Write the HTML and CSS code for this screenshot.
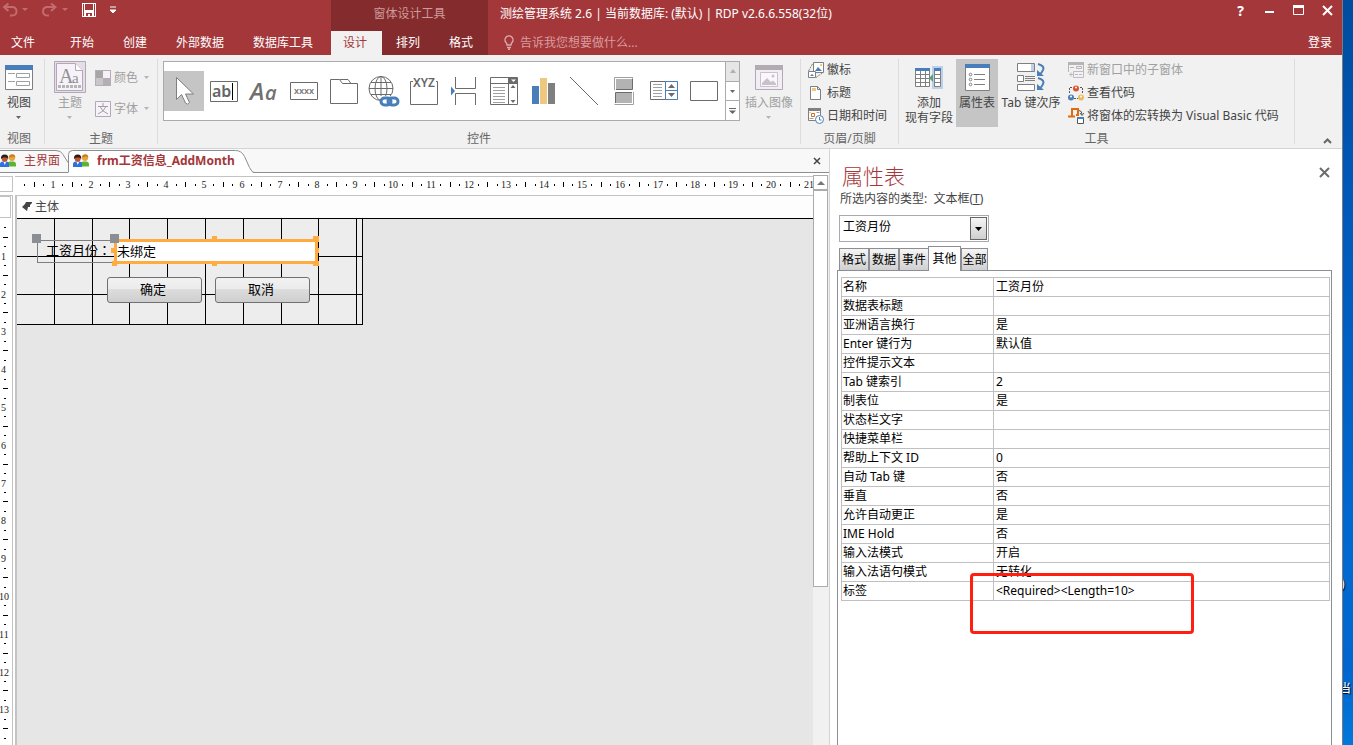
FILE: index.html
```html
<!DOCTYPE html>
<html lang="zh-CN">
<head>
    <meta charset="UTF-8">
    <meta name="viewport" content="width=device-width, initial-scale=1.0">
    <title>测绘管理系统 2.6</title>
    <link rel="stylesheet" href="styles.css">
</head>
<body>
    <svg class="sprite" aria-hidden="true">
        <symbol id="caret" viewBox="0 0 6 3"><path d="M0 0h5L2.500 3z" fill="currentColor"/></symbol>
        <symbol id="users" viewBox="0 0 16 14">
            <path d="M7.500 12.500V9.500q0-2 2.500-2h3q3 0 3 3v2z" fill="#5cb531"/>
            <circle cx="12" cy="4" r="3" fill="#e8a33c"/>
            <path d="M9 3.500q0-3.500 3.500-3.300 3 .3 2.800 3.500l-2-1.200z" fill="#c97d1c"/>
            <path d="M0 13v-2.500q0-3 3-3h3q3 0 3 3V13z" fill="#2f6fe0"/>
            <path d="M3.500 8h2.500L4.800 11z" fill="#fff"/>
            <circle cx="4.700" cy="4.800" r="3" fill="#c4572a"/>
            <path d="M1 5q-.5-4.500 3.700-4.500T8.200 5L6.500 3.500 3 3.600z" fill="#2a1c1a"/>
        </symbol>
    </svg>

    <div class="window">
        <header class="title-bar">
            <div class="main-tabs">
                <div class="quick-access">
                    <button class="qat undo" aria-label="撤消"><svg width="26" height="16" viewBox="0 0 26 16"><path d="M6.500 1.500L2 5l4.500 4M2.500 5H10q4.500 0 4.500 4.500T8 13.500" fill="none" stroke="#c26c6f" stroke-width="2"/><path d="M20 6h6l-3 3z" fill="#c26c6f"/></svg></button>
                    <button class="qat redo" aria-label="恢复"><svg width="26" height="16" viewBox="0 0 26 16"><path d="M9 1.500L13.500 5 9 9M13 5H5.500Q1 5 1 9.500t6 4" fill="none" stroke="#c26c6f" stroke-width="2"/><path d="M20 6h6l-3 3z" fill="#c26c6f"/></svg></button>
                    <button class="qat save" aria-label="保存"><svg width="14" height="14" viewBox="0 0 14 14"><path d="M0 0h14v14H0zM3 1v6h8V1zM4 10v3h2v-2h2v2h2v-3zM1 13h1V1H1zM12 13h1V1h-1z" fill="#fff" fill-rule="evenodd"/></svg></button>
                    <button class="qat" aria-label="自定义快速访问工具栏"><svg width="6" height="8" viewBox="0 0 6 8"><path d="M0 1h6M0 4h6L3 7z" stroke="#fff" fill="#fff" stroke-width="1"/></svg></button>
                </div>
                <nav class="tabs">
                    <button class="file-tab">文件</button>
                    <button>开始</button>
                    <button>创建</button>
                    <button>外部数据</button>
                    <button>数据库工具</button>
                </nav>
            </div>
            <div class="context-tabs">
                <div class="context-title">窗体设计工具</div>
                <nav class="tabs">
                    <button class="selected">设计</button>
                    <button>排列</button>
                    <button>格式</button>
                </nav>
            </div>
            <div class="title-area">
                <div class="title-row">
                    <h1>测绘管理系统 2.6 | 当前数据库: (默认) | RDP v2.6.6.558(32位)</h1>
                    <div class="window-buttons">
                        <button class="help" aria-label="帮助">?</button>
                        <button aria-label="最小化"><svg width="11" height="11"><path d="M1 7h9" stroke="#fff" stroke-width="2"/></svg></button>
                        <button aria-label="最大化"><svg width="11" height="11"><path d="M.5.500h10v9H.5z" fill="none" stroke="#fff"/><path d="M0 1.500h11" stroke="#fff" stroke-width="3"/></svg></button>
                        <button aria-label="关闭"><svg width="11" height="11"><path d="M1 1l9 9M10 1l-9 9" stroke="#fff" stroke-width="2"/></svg></button>
                    </div>
                </div>
                <div class="tell-row">
                    <button class="tell-me">
                        <svg width="10" height="15" viewBox="0 0 10 15"><path d="M3 10q0-1.500-1-2.500a4 4 0 1 1 6 0q-1 1-1 2.500zM3 12.500h4M4 14.300h2" fill="none" stroke="#dca9aa" stroke-width="1.400"/></svg>
                        <span>告诉我您想要做什么...</span>
                    </button>
                    <a class="sign-in" href="#">登录</a>
                </div>
            </div>
        </header>

        <div class="ribbon">
            <section class="group group-view">
                <div class="group-body">
                    <button class="big">
                        <span class="big-icon"><svg width="28" height="25"><path d="M.5.5h27v24H.5z" fill="#fff" stroke="#7f7f7f"/><path d="M0 0h28v5H0z" fill="#4a7ebb"/><path d="M3 8.500h7M3 16.500h7" stroke="#a0a0a0"/><path d="M11.500 8.500h13v4h-13zM11.500 16.500h13v4h-13z" fill="#fff" stroke="#a0a0a0"/></svg></span>
                        <span>视图</span>
                        <svg class="caret"><use href="#caret"/></svg>
                    </button>
                </div>
                <h2>视图</h2>
            </section>

            <section class="group group-theme">
                <div class="group-body">
                    <button class="big" disabled>
                        <span class="big-icon"><svg width="32" height="32"><path d="M.5.500h31v31H.5z" fill="#e5dde8" stroke="#b3a9b6"/><path d="M2.500 2.500h19l7 7v20h-26z" fill="#f7f2f9" stroke="#b3a9b6"/><path d="M21.500 2.500v7h7" fill="#fff" stroke="#b3a9b6"/><text x="5" y="22" font-family="Liberation Serif, serif" font-size="20" fill="#919191">A</text><text x="18" y="22" font-family="Liberation Serif, serif" font-size="15" fill="#919191">a</text><path d="M4 25.500h24" stroke="#b5b5b5" stroke-width="3" stroke-dasharray="3 1"/></svg></span>
                        <span>主题</span>
                        <svg class="caret"><use href="#caret"/></svg>
                    </button>
                    <div class="stack stack-theme">
                        <button class="small" disabled>
                            <svg width="16" height="16"><path d="M0 0h16v16H0z" fill="#b3adb5"/><path d="M8 1h7v7H8z" fill="#f7effa"/><path d="M1 8h7v7H1z" fill="#c9c6ca"/><path d="M1 1h7v7H1z" fill="#a6a6a6"/></svg>
                            <span>颜色</span>
                            <svg class="caret"><use href="#caret"/></svg>
                        </button>
                        <button class="small" disabled>
                            <svg width="16" height="16"><path d="M.5.500h15v15H.5z" fill="#f7f2f9" stroke="#b3a9b6"/><path d="M8 2v3M3 5.500h10M5 5.500q2 5 8 7.500M11 5.500q-2 5-8 7.500" fill="none" stroke="#a0a0a0"/></svg>
                            <span>字体</span>
                            <svg class="caret"><use href="#caret"/></svg>
                        </button>
                    </div>
                </div>
                <h2>主题</h2>
            </section>

            <section class="group group-controls">
                <div class="group-body">
                    <div class="gallery">
                        <button class="tool selected" aria-label="选择"><svg width="28" height="28"><path d="M6.500.5v22l5-5 4 8.500q2 2.500 4-.5L15.500 17h8z" fill="#fff" stroke="#7f7f7f"/></svg></button>
                        <button class="tool" aria-label="文本框"><svg width="28" height="28"><path d="M.5 4.500h27v20H.5z" fill="#fff" stroke="#6b6b6b"/><text x="2" y="20" font-family="Noto Sans, sans-serif" font-size="16" font-weight="600" fill="#666">ab</text><path d="M22.500 6v17" stroke="#000"/></svg></button>
                        <button class="tool" aria-label="标签"><svg width="32" height="32"><text x="2" y="25" font-family="Open Sans, sans-serif" font-size="24" font-style="italic" font-weight="600" fill="#707070">A</text><text x="17" y="25" font-family="Open Sans, sans-serif" font-size="20" font-style="italic" font-weight="600" fill="#707070">a</text></svg></button>
                        <button class="tool" aria-label="按钮"><svg width="28" height="28"><path d="M.5 5.500h27v17H.5z" fill="#fff" stroke="#6b6b6b"/><text x="4" y="17" font-family="Noto Sans, sans-serif" font-size="9" font-weight="600" fill="#777">xxxx</text></svg></button>
                        <button class="tool" aria-label="选项卡控件"><svg width="28" height="28"><path d="M.5 26.500V2.500h9l3 4h15v20zM10 2.500h8l3 4" fill="#fff" stroke="#6b6b6b"/></svg></button>
                        <button class="tool" aria-label="超链接"><svg width="32" height="32"><g fill="none" stroke="#6b6b6b"><circle cx="13" cy="13.500" r="12"/><ellipse cx="13" cy="13.500" rx="6" ry="12"/><path d="M13 1.500v24M1 13.500h24M3 7.500h20M3 19.500h20"/></g><path d="M12 21h19v11H12z" fill="#fff"/><g fill="none" stroke="#4a7ebb" stroke-width="3"><rect x="13" y="23" width="10" height="7" rx="3.500"/><rect x="20" y="23" width="10" height="7" rx="3.500"/></g></svg></button>
                        <button class="tool" aria-label="选项组"><svg width="28" height="32"><path d="M3 6.500H.5v23h27v-23H26" fill="none" stroke="#6b6b6b"/><text x="3" y="12" font-family="Noto Sans, sans-serif" font-size="12" font-weight="600" fill="#666">XYZ</text></svg></button>
                        <button class="tool" aria-label="分页符"><svg width="30" height="28"><path d="M6.500 0v11.500h20V0M6.500 28V16.500h20V28" fill="none" stroke="#6b6b6b"/><path d="M2 9.500l4 4.500-4 4.500z" fill="#4a7ebb"/></svg></button>
                        <button class="tool" aria-label="组合框"><svg width="28" height="28"><path d="M.5.500h27v27H.5zM.5 6.500h27M18.500 1v27" fill="#fff" stroke="#6b6b6b"/><path d="M19 1h8v5h-8z" fill="#6b6b6b"/><path d="M21 2.500h5L23.500 5z" fill="#fff"/><path d="M3 10.500h12M3 13.500h12M3 16.500h12M3 19.500h12M3 22.500h12M3 25.500h12" stroke="#a0a0a0"/><path d="M20.500 11h5l-2.500-3zM20.500 23h5l-2.500 3z" fill="#6b6b6b"/></svg></button>
                        <button class="tool" aria-label="图表"><svg width="24" height="28"><path d="M0 9h7v18H0z" fill="#4a7ebb"/><path d="M8 1h7v26H8z" fill="#edc87e"/><path d="M16 6h7v21h-7z" fill="#7f7f7f"/></svg></button>
                        <button class="tool" aria-label="直线"><svg width="28" height="28"><path d="M0 0l28 28" stroke="#6b6b6b"/></svg></button>
                        <button class="tool" aria-label="切换按钮"><svg width="20" height="28"><path d="M2 2h16v10H2zM2 16h16v10H2z" fill="#b3b3b3"/><path d="M.5 13V.5H19" fill="none" stroke="#a0a0a0"/><path d="M18.500 1.500v11H2" fill="none" stroke="#6b6b6b"/><path d="M1.500 26V15.500H18" fill="none" stroke="#6b6b6b"/><path d="M19.500 15v12.500H.5" fill="none" stroke="#a0a0a0"/></svg></button>
                        <button class="tool" aria-label="列表框"><svg width="28" height="28"><path d="M.5 4.500h27v18H.5z" fill="#fff" stroke="#6b6b6b"/><path d="M3 7.500h9M3 10.500h9M3 13.500h9M3 16.500h9M3 19.500h9" stroke="#a0a0a0"/><path d="M15.500 4.500h12v18h-12zM15.500 13.500h12" fill="#fff" stroke="#4a7ebb"/><path d="M18 11h7l-3.500-4zM18 16h7l-3.500 4z" fill="#6b6b6b"/></svg></button>
                        <button class="tool" aria-label="矩形"><svg width="28" height="28"><path d="M.5 4.500h27v19H.5z" fill="#fff" stroke="#6b6b6b"/></svg></button>
                        <div class="gallery-scroll">
                            <button disabled aria-label="上一行"><svg width="6" height="4"><path d="M0 4h6L3 0z" fill="#b0b0b0"/></svg></button>
                            <button aria-label="下一行"><svg class="caret"><use href="#caret"/></svg></button>
                            <button aria-label="其他控件"><svg width="7" height="6"><path d="M0 .5h7" stroke="#666"/><path d="M0 2.500h7L3.500 6z" fill="#666"/></svg></button>
                        </div>
                    </div>
                    <button class="big insert-image" disabled>
                        <span class="big-icon"><svg width="28" height="25"><path d="M.5.500h27v24H.5z" fill="#f3eef5" stroke="#b3a9b6"/><path d="M0 0h28v5H0z" fill="#b0acb1"/><path d="M5.500 7.500h17v14h-17z" fill="#faf6fb" stroke="#c9c2cb"/><path d="M7 20v-2l5-5 4 4 2-1.500 3 3V20z" fill="#c9c2cb"/><circle cx="18" cy="11" r="1.500" fill="#c9c2cb"/></svg></span>
                        <span>插入图像</span>
                        <svg class="caret"><use href="#caret"/></svg>
                    </button>
                </div>
                <h2>控件</h2>
            </section>

            <section class="group group-header">
                <div class="group-body">
                    <div class="stack">
                        <button class="small"><svg width="16" height="16"><path d="M5.500.5h10v10h-10z" fill="#fff" stroke="#7f7f7f"/><path d="M7 9l3-4 4 4z" fill="#4a7ebb"/><path d="M12 2h2v2h-2z" fill="#edc87e"/><path d="M.5 9.500h7v6h-7z" fill="#fff" stroke="#7f7f7f"/><path d="M2 14l2-2 2 2z" fill="#4a7ebb"/><path d="M.5 9L5 1M8 15.500l7-5" stroke="#7f7f7f" stroke-dasharray="2 1"/></svg><span>徽标</span></button>
                        <button class="small"><svg width="16" height="16"><path d="M2.500 1.500h7l3 3v10h-10zM9.500 1.500v3h3" fill="#fff" stroke="#7f7f7f"/><path d="M4 3h4v3H4z" fill="#edc87e"/></svg><span>标题</span></button>
                        <button class="small"><svg width="16" height="16"><path d="M.5.500h12v12H.5z" fill="#fff" stroke="#7f7f7f"/><path d="M0 0h13v3H0z" fill="#7f7f7f"/><path d="M3.500 5.500h3v3h-3z" fill="none" stroke="#e06c10"/><path d="M1.500 4.500h1M8.500 4.500h3M1.500 10.500h4" stroke="#a0a0a0"/><circle cx="11.500" cy="11.500" r="4" fill="#fff" stroke="#4a7ebb"/><path d="M11.500 9v3h2" fill="none" stroke="#4a7ebb"/></svg><span>日期和时间</span></button>
                    </div>
                </div>
                <h2>页眉/页脚</h2>
            </section>

            <section class="group group-tools">
                <div class="group-body">
                    <button class="big add-field">
                        <span class="big-icon"><svg width="28" height="25"><path d="M.5 3.500h14v18H.5z" fill="#fff" stroke="#7f7f7f"/><path d="M.5 9.500h14M.5 13.500h14M.5 17.500h14M5.500 3v18M10.500 3v18" stroke="#7f7f7f"/><path d="M0 3h15v3H0z" fill="#4a7ebb"/><path d="M17 1h11v23H17z" fill="#bdd0ea"/><path d="M19.500 3.500h6v18h-6zM19.500 9.500h6M19.500 13.500h6M19.500 17.500h6" fill="#fff" stroke="#7f7f7f"/><path d="M19 3h7v3h-7z" fill="#4a7ebb"/><path d="M18 9v8l-4-4z" fill="#5ba07c"/></svg></span>
                        <span>添加<br>现有字段</span>
                    </button>
                    <button class="big selected sheet-toggle">
                        <span class="big-icon"><svg width="25" height="27"><path d="M.5.500h24v26H.5z" fill="#fff" stroke="#7f7f7f"/><path d="M0 0h25v4H0z" fill="#4a7ebb"/><path d="M9 10.500h11M9 15.500h11M9 20.500h11" stroke="#7f7f7f"/><g fill="#fff" stroke="#7f7f7f"><circle cx="5.500" cy="10.500" r="1.300"/><circle cx="5.500" cy="15.500" r="1.300"/><circle cx="5.500" cy="20.500" r="1.300"/></g></svg></span>
                        <span>属性表</span>
                    </button>
                    <button class="big tab-order">
                        <span class="big-icon"><svg width="28" height="28"><path d="M.5.500h17v8H.5zM.5 12.500h6v6h-6zM.5 21.500h17v6H.5z" fill="#fff" stroke="#7f7f7f"/><path d="M14 1h3v7h-3z" fill="#bdd0ea"/><path d="M8 13.500h10M8 15.500h10M8 17.500h10" stroke="#7f7f7f"/><path d="M21 1q7 2 5 6-1 3-4 5M21 15q7 2 5 6-1 3-4 5" fill="none" stroke="#4a7ebb" stroke-width="2"/><path d="M20 7v6h7zM20 21v6h7z" fill="#4a7ebb"/></svg></span>
                        <span>Tab 键次序</span>
                    </button>
                    <div class="stack">
                        <button class="small" disabled><svg width="16" height="16"><path d="M.5.500h15v11" fill="none" stroke="#b5b5b5"/><path d="M0 0h16v3H0z" fill="#b5b5b5"/><path d="M.5 3v7M2 5.500h4M8.500 4.500h5v2h-5z" fill="none" stroke="#b5b5b5"/><path d="M5.500 9.500h10v6h-10zM7 12.500h3M11 12.500h3M1 12.500h4M3 10.500v4" fill="none" stroke="#c3b6c6"/></svg><span>新窗口中的子窗体</span></button>
                        <button class="small"><svg width="16" height="16"><path d="M4 2.500H1.500V9M12 2.500h2.500V8M6 13.500h4" fill="none" stroke="#555" stroke-dasharray="2 1"/><circle cx="8" cy="3.500" r="3" fill="#d9532c"/><circle cx="3" cy="12.500" r="3" fill="#4a7ebb"/><circle cx="13" cy="12.500" r="3" fill="#edb95e"/><circle cx="8" cy="2.500" r="1" fill="#fff"/><circle cx="3" cy="11.500" r="1" fill="#fff"/><circle cx="13" cy="11.500" r="1" fill="#fff"/></svg><span>查看代码</span></button>
                        <button class="small"><svg width="16" height="16"><path d="M4 8V1h6v6H8M7 8.500H0" fill="none" stroke="#e06c10" stroke-width="2"/><path d="M11 2.500q3 0 3 4M12 5l2 2.500L16 5" fill="none" stroke="#555"/><path d="M9.500 9.500h6v6h-6z" fill="#fff" stroke="#555"/><path d="M9 9h7v2H9z" fill="#4a7ebb"/></svg><span>将窗体的宏转换为 Visual Basic 代码</span></button>
                    </div>
                </div>
                <h2>工具</h2>
            </section>
            <button class="collapse" aria-label="折叠功能区"><svg width="9" height="6"><path d="M1 5l3.500-3.500L8 5" fill="none" stroke="#666" stroke-width="2"/></svg></button>
        </div>

        <main class="work">
            <section class="document">
                <div class="doc-tabs">
                    <button class="doc-tab first">
                        <svg class="tab-shape" width="70" height="24"><path d="M0 1.500h56q5 0 7 4l5 8" fill="none" stroke="#8b8e94"/></svg>
                        <svg class="users"><use href="#users"/></svg>
                        <span>主界面</span>
                    </button>
                    <button class="doc-tab active">
                        <svg class="tab-shape" width="186" height="24"><path d="M.5 24V5.500q0-4 4-4h163q6 0 9 6l5 11q2.500 5 4.500 5.500z" fill="#fff"/><path d="M.5 23V5.500q0-4 4-4h163q6 0 9 6l5 11q2.500 5 4.500 5" fill="none" stroke="#8b8e94"/></svg>
                        <svg class="users"><use href="#users"/></svg>
                        <span>frm工资信息_AddMonth</span>
                    </button>
                    <button class="doc-close" aria-label="关闭文档"><svg width="8" height="8"><path d="M1 1l6 6M7 1L1 7" stroke="#444" stroke-width="1.500"/></svg></button>
                </div>
                <div class="designer">
                    <div class="corner"></div>
                    <svg class="ruler-h" id="rulerH"></svg>
                    <div class="side">
                        <div class="section-select"></div>
                        <svg class="ruler-v" id="rulerV"></svg>
                    </div>
                    <div class="canvas">
                        <div class="section-bar">
                            <svg width="11" height="10"><path d="M4 0h6v1L8 3v2H6L5 9 0 5l3-3z" fill="#444"/></svg>
                            <span>主体</span>
                        </div>
                        <div class="form-design">
                            <svg class="grid" id="grid"></svg>
                            <label class="field-label" for="month" lang="zh-TW">工资月份：</label>
                            <input class="field-box" id="month" type="text" value="未绑定">
                            <svg class="handles" width="300" height="40"><path d="M0 3h9v9H0zM78 3h9v9h-9z" fill="#8b8e95"/><path d="M180 5h5v4h-5zM281 5h6v6h-6zM180 32h5v3h-5zM281 30h6v5h-6zM79 17h5v5h-5zM284 17h3v5h-3zM80 30h5v5h-5z" fill="#ffab3f"/></svg>
                            <button class="form-button ok">确定</button>
                            <button class="form-button cancel">取消</button>
                        </div>
                    </div>
                    <div class="scrollbar">
                        <button aria-label="向上滚动"><svg width="8" height="4"><path d="M0 4h8L4 0z" fill="#777"/></svg></button>
                        <div class="thumb"></div>
                        <div class="track"></div>
                    </div>
                </div>
            </section>

            <aside class="sheet">
                <div class="sheet-head">
                    <h2>属性表</h2>
                    <button aria-label="关闭属性表"><svg width="11" height="11"><path d="M1 1l9 9M10 1l-9 9" stroke="#6b6b6b" stroke-width="2"/></svg></button>
                </div>
                <label class="sheet-type" for="object">所选内容的类型:&nbsp; 文本框(<u>T</u>)</label>
                <div class="combo">
                    <select id="object"><option>工资月份</option></select>
                    <span class="combo-arrow"><svg width="7" height="4"><path d="M0 0h7L3.500 4z"/></svg></span>
                </div>
                <div class="sheet-tabs">
                    <button>格式</button>
                    <button>数据</button>
                    <button>事件</button>
                    <button class="active">其他</button>
                    <button>全部</button>
                </div>
                <div class="sheet-panel">
                    <table>
                        <tr><th>名称</th><td>工资月份</td></tr>
                        <tr><th>数据表标题</th><td></td></tr>
                        <tr><th>亚洲语言换行</th><td>是</td></tr>
                        <tr><th>Enter 键行为</th><td>默认值</td></tr>
                        <tr><th>控件提示文本</th><td></td></tr>
                        <tr><th>Tab 键索引</th><td>2</td></tr>
                        <tr><th>制表位</th><td>是</td></tr>
                        <tr><th>状态栏文字</th><td></td></tr>
                        <tr><th>快捷菜单栏</th><td></td></tr>
                        <tr><th>帮助上下文 ID</th><td>0</td></tr>
                        <tr><th>自动 Tab 键</th><td>否</td></tr>
                        <tr><th>垂直</th><td>否</td></tr>
                        <tr><th>允许自动更正</th><td>是</td></tr>
                        <tr><th>IME Hold</th><td>否</td></tr>
                        <tr><th>输入法模式</th><td>开启</td></tr>
                        <tr><th>输入法语句模式</th><td>无转化</td></tr>
                        <tr><th>标签</th><td>&lt;Required&gt;&lt;Length=10&gt;</td></tr>
                    </table>
                    <div class="marker"></div>
                </div>
            </aside>
        </main>
    </div>

    <div class="desktop">
        <span class="desktop-label upper">)</span>
        <span class="desktop-label lower">当</span>
    </div>

    <script src="ruler.js"></script>
</body>
</html>
```

FILE: styles.css
```css
* {
    box-sizing: border-box;
}

body {
    margin: 0;
    display: flex;
    height: 100vh;
    overflow: hidden;
    font-family: "Noto Sans", "Noto Sans CJK SC", sans-serif;
    font-size: 12px;
    line-height: 16px;
    color: #444;
}

button {
    margin: 0;
    padding: 0;
    border: none;
    background: none;
    font: inherit;
    color: inherit;
    white-space: nowrap;
}

h1, h2 {
    margin: 0;
    font-size: 12px;
    font-weight: normal;
}

svg {
    display: block;
    flex: none;
}

.sprite {
    position: absolute;
    width: 0;
    height: 0;
}

.caret {
    width: 6px;
    height: 3px;
    color: #666;
}

.window {
    flex: 1;
    min-width: 0;
    display: flex;
    flex-direction: column;
    background: #fff;
}

/* title bar */
.title-bar {
    display: flex;
    height: 55px;
    background: #a4373a;
    color: #fff;
}

.main-tabs {
    width: 331px;
}

.quick-access {
    display: flex;
    align-items: center;
    height: 31px;
    padding: 0 0 11px 2px;
}

.qat.undo, .qat.redo {
    margin-right: 14px;
}

.qat.save {
    margin-right: 14px;
}

.tabs {
    display: flex;
    height: 24px;
}

.main-tabs .tabs {
    padding-left: 11px;
    gap: 29px;
}

.tabs .file-tab {
    margin-right: 6px;
}

.context-tabs {
    width: 157px;
    background: #832b2d;
}

.context-title {
    height: 31px;
    padding-top: 6px;
    text-align: center;
    color: #cf9a9b;
}

.context-tabs .tabs {
    gap: 2px;
}

.context-tabs .tabs button {
    padding: 0 15px 0 12px;
}

.context-tabs .tabs .selected {
    background: #f1f1f1;
    color: #a4373a;
}

.title-area {
    flex: 1;
}

.title-row, .tell-row {
    display: flex;
    justify-content: space-between;
    padding-left: 12px;
}

.title-row {
    height: 31px;
}

.title-row h1 {
    padding-top: 6px;
}

.window-buttons {
    display: flex;
    height: 21px;
}

.window-buttons button {
    display: flex;
    align-items: center;
    justify-content: center;
    width: 29px;
}

.window-buttons .help {
    font-size: 14px;
    font-weight: bold;
}

.tell-row {
    align-items: center;
    height: 23px;
    padding: 0 10px 0 16px;
}

.tell-me {
    display: flex;
    align-items: center;
    gap: 6px;
    color: #d99c9d;
}

.sign-in {
    color: #fff;
    text-decoration: none;
}

/* ribbon */
.ribbon {
    display: flex;
    height: 94px;
    padding: 4px 0;
    background: #f1f1f1;
    border-bottom: 1px solid #d4d4d4;
}

.group {
    display: flex;
    flex-direction: column;
    border-right: 1px solid #dcdcdc;
}

.group-body {
    display: flex;
    flex: none;
    height: 72px;
}

.group h2 {
    flex: none;
    text-align: center;
    color: #666;
}

.group-view {
    width: 45px;
    padding-right: 6px;
}

.group-theme {
    width: 113px;
}

.group-controls {
    width: 643px;
}

.group-header {
    width: 98px;
}

.group-header .group-body {
    padding-left: 7px;
}

.group-tools {
    width: 396px;
}

.group-tools .group-body {
    padding: 0 10px 0 6px;
}

.big {
    display: flex;
    flex-direction: column;
    align-items: center;
    height: 68px;
    line-height: 15px;
}

.group-view .big {
    width: 38px;
}

.group-theme .big {
    width: 50px;
}

.big-icon {
    display: flex;
    align-items: center;
    justify-content: center;
    height: 36px;
}

.big .caret {
    margin-top: 6px;
}

.big:disabled, .small:disabled {
    color: #a0a0a0;
}

button:disabled .caret {
    color: #b5b5b5;
}

.add-field {
    width: 48px;
    margin-right: 3px;
}

.sheet-toggle {
    width: 42px;
}

.tab-order {
    width: 66px;
    margin-right: 4px;
}

.big.selected, .tool.selected {
    background: #c5c5c5;
}

.stack {
    margin-top: -1px;
}

.stack-theme {
    display: flex;
    flex-direction: column;
    gap: 8px;
    padding-top: 8px;
}

.small {
    display: flex;
    align-items: center;
    gap: 3px;
    height: 23px;
}

.small .caret {
    margin-left: 3px;
}

.gallery {
    display: flex;
    height: 60px;
    margin: 2px 0 0 5px;
    background: #fff;
    border: 1px solid #ababab;
}

.tool {
    display: flex;
    align-items: center;
    justify-content: center;
    width: 40px;
    height: 40px;
    margin-top: 9px;
}

.gallery-scroll {
    display: flex;
    flex-direction: column;
    width: 14px;
    margin-left: 1px;
    border-left: 1px solid #ababab;
}

.gallery-scroll button {
    display: flex;
    flex: 1;
    align-items: center;
    justify-content: center;
    border-bottom: 1px solid #ababab;
}

.gallery-scroll button:last-child {
    border-bottom: none;
}

.gallery-scroll button:disabled {
    background: #e6e6e6;
}

.insert-image {
    padding: 0 6px 0 5px;
}

.collapse {
    align-self: flex-end;
    margin: 0 10px 0 auto;
}

/* document */
.work {
    display: flex;
    flex: 1;
    min-height: 0;
}

.document {
    flex: 1;
    min-width: 0;
    display: flex;
    flex-direction: column;
    border-right: 1px solid #d4d4d4;
}

.doc-tabs {
    display: flex;
    height: 24px;
    background: #f8f8f8;
    border-bottom: 1px solid #8b8e94;
}

.doc-tab {
    position: relative;
    display: flex;
    align-items: center;
    color: #a4373a;
}

.doc-tab.first {
    width: 68px;
    gap: 8px;
}

.doc-tab.active {
    width: 186px;
    gap: 8px;
    padding-left: 5px;
    font-weight: bold;
}

.tab-shape {
    position: absolute;
    left: 0;
    top: 0;
}

.users {
    position: relative;
    width: 16px;
    height: 14px;
}

.doc-tab span {
    position: relative;
}

.doc-close {
    margin: 0 8px 0 auto;
}

.designer {
    flex: 1;
    min-height: 0;
    display: grid;
    grid-template-columns: 15px 1fr 16px;
    grid-template-rows: 22px 1fr;
}

.corner {
    width: 13px;
    height: 16px;
    margin-top: 3px;
    border: 1px solid #c3c3c3;
    border-left: none;
}

.ruler-h {
    width: 100%;
    height: 19px;
    margin-top: 3px;
    border-top: 1px solid #c3c3c3;
}

.ruler-h text, .ruler-v text {
    font-family: "Liberation Serif", serif;
    font-size: 10px;
    fill: #222;
}

.side {
    width: 13px;
    display: flex;
    flex-direction: column;
    min-height: 0;
    border-top: 1px solid #c3c3c3;
    border-right: 1px solid #c3c3c3;
}

.section-select {
    width: 11px;
    height: 22px;
    border: 1px solid #c3c3c3;
    border-left: none;
}

.ruler-v {
    flex: 1;
    width: 12px;
    min-height: 0;
}

.canvas {
    min-width: 0;
    background: #e6e6e6;
    border-top: 1px solid #c3c3c3;
    border-left: 2px solid #c3c3c3;
}

.section-bar {
    display: flex;
    align-items: center;
    gap: 2px;
    height: 23px;
    padding-left: 5px;
    background: #fdfdfd;
    border-bottom: 1px solid #000;
}

.form-design {
    position: relative;
    width: 346px;
    height: 106px;
    background: #ededed;
    border-right: 1px solid #000;
    border-bottom: 1px solid #000;
    font-size: 13px;
    color: #000;
}

.grid {
    width: 100%;
    height: 100%;
}

/* controls placed on the design surface */
.field-label, .field-box, .form-button, .handles {
    position: absolute;
}

.field-label {
    left: 20px;
    top: 21px;
    width: 78px;
    height: 23px;
    padding-left: 8px;
    font-family: "Noto Sans CJK TC", sans-serif;
    line-height: 18px;
    white-space: nowrap;
    border: 1px solid #7f7f7f;
}

.field-box {
    left: 97px;
    top: 20px;
    width: 204px;
    height: 25px;
    padding: 0 0 2px;
    border: 3px solid #ffab3f;
    background: #fff;
    font: inherit;
    color: inherit;
}

.handles {
    left: 15px;
    top: 12px;
    pointer-events: none;
}

.form-button {
    top: 58px;
    width: 95px;
    height: 26px;
    padding: 0 3px 2px 0;
    border: 1px solid #707070;
    border-radius: 3px;
    background: linear-gradient(#f2f2f2 0%, #ebebeb 45%, #dddddd 46%, #cfcfcf 100%);
}

.form-button.ok {
    left: 90px;
}

.form-button.cancel {
    left: 198px;
}

.scrollbar {
    grid-column: 3;
    grid-row: 1 / 3;
    display: flex;
    flex-direction: column;
    margin-top: 2px;
    padding-right: 1px;
    background: #f1f1f1;
}

.scrollbar button {
    display: flex;
    align-items: center;
    justify-content: center;
    height: 15px;
    border: 1px solid #ababab;
    background: #fff;
}

.thumb {
    flex: 5;
    background: #fff;
    border: 1px solid #ababab;
}

.track {
    flex: 2;
}

/* property sheet */
.sheet {
    width: 512px;
    display: flex;
    flex-direction: column;
    padding: 14px 10px 0 7px;
}

.sheet-head {
    display: flex;
    justify-content: space-between;
    height: 28px;
    padding: 0 2px 0 5px;
}

.sheet-head h2 {
    font-size: 21px;
    font-weight: 300;
    line-height: 26px;
    color: #a4373a;
}

.sheet-head button {
    height: 18px;
}

.sheet-type {
    padding-left: 3px;
}

.combo {
    position: relative;
    width: 150px;
    height: 27px;
    margin: 8px 0 4px 2px;
}

.combo select {
    appearance: none;
    width: 100%;
    height: 100%;
    padding: 0 20px 4px 3px;
    border: 1px solid #a9a9b0;
    border-radius: 0;
    background: #fff;
    font: inherit;
    color: #000;
}

.combo-arrow {
    position: absolute;
    top: 2px;
    right: 2px;
    display: flex;
    align-items: center;
    justify-content: center;
    width: 17px;
    height: 23px;
    border: 1px solid #666;
    background: linear-gradient(#f5f5f5, #cfcfcf);
    pointer-events: none;
}

.sheet-tabs {
    position: relative;
    z-index: 1;
    display: flex;
    align-items: flex-end;
    height: 24px;
    padding-left: 2px;
    color: #000;
}

.sheet-tabs button {
    width: 30px;
    height: 22px;
    border: 1px solid #8b8e94;
    border-bottom: none;
    background: linear-gradient(#f5f5f5, #d0d0d0);
}

.sheet-tabs .active {
    width: 33px;
    height: 25px;
    margin: 0 0 -1px -1px;
    background: #fff;
}

.sheet-tabs button:last-child {
    width: 27px;
}

.sheet-panel {
    position: relative;
    flex: 1;
    padding: 6px 1px 0 3px;
    border: 1px solid #8b8e94;
    border-bottom: none;
}

.sheet-panel table {
    width: 100%;
    table-layout: fixed;
    border-collapse: collapse;
    color: #000;
}

.sheet-panel th, .sheet-panel td {
    height: 19px;
    padding: 0 2px 0 1px;
    border: 1px solid #c0c0c0;
    font-weight: normal;
    text-align: left;
}

.sheet-panel th {
    width: 152px;
}

.sheet-panel td {
    padding-left: 2px;
}

.marker {
    position: absolute;
    left: 132px;
    top: 302px;
    width: 224px;
    height: 61px;
    border: 3px solid #ff1e10;
    border-radius: 4px;
}

/* strip of desktop behind the window */
.desktop {
    position: relative;
    width: 11px;
    overflow: hidden;
    border-left: 1px solid #7a7a80;
    background: linear-gradient(#004c9e, #0058b8 25%, #006ad2 75%, #0067cf 90%, #0078dc);
    color: #fff;
}

.desktop-label {
    position: absolute;
    text-shadow: 1px 1px 1px #000;
}

.upper {
    left: -2px;
    top: 576px;
}

.lower {
    left: -4px;
    top: 681px;
}
```

FILE: ruler.js
```javascript
const CM = 96 / 2.54;

function line(x1, y1, x2, y2) {
    return `<path d="M${x1} ${y1}L${x2} ${y2}" stroke="#000" shape-rendering="crispEdges"/>`;
}

function drawHorizontal(svg) {
    let out = '';
    for (let i = 0; i * CM < svg.clientWidth; i++) {
        for (let q = 1; q < 4; q++) {
            const x = Math.round((i + q / 4) * CM) + 0.5;
            out += q === 2 ? line(x, 5, x, 10) : line(x, 7, x, 9);
        }
        if (i > 0) {
            out += `<text x="${Math.round(i * CM)}" y="11" text-anchor="middle">${i}</text>`;
        }
    }
    svg.innerHTML = out;
}

function drawVertical(svg) {
    let out = '';
    for (let i = 0; i * CM < svg.clientHeight; i++) {
        for (let q = 1; q < 4; q++) {
            const y = Math.round((i + q / 4) * CM) + 0.5;
            out += q === 2 ? line(3, y, 8, y) : line(4, y, 6, y);
        }
        if (i > 0) {
            out += `<text x="${i > 9 ? -1 : 1}" y="${Math.round(i * CM) + 4}">${i}</text>`;
        }
    }
    svg.innerHTML = out;
}

function drawGrid(svg) {
    const w = svg.clientWidth;
    const h = svg.clientHeight;
    let out = '';
    for (let x = CM; x < w; x += CM) {
        const left = Math.round(x) - 0.5;
        out += line(left, 0, left, h);
    }
    for (let y = CM; y < h; y += CM) {
        const top = Math.round(y) - 0.5;
        out += line(0, top, w, top);
    }
    svg.innerHTML = out;
}

drawHorizontal(document.getElementById('rulerH'));
drawVertical(document.getElementById('rulerV'));
drawGrid(document.getElementById('grid'));
```
